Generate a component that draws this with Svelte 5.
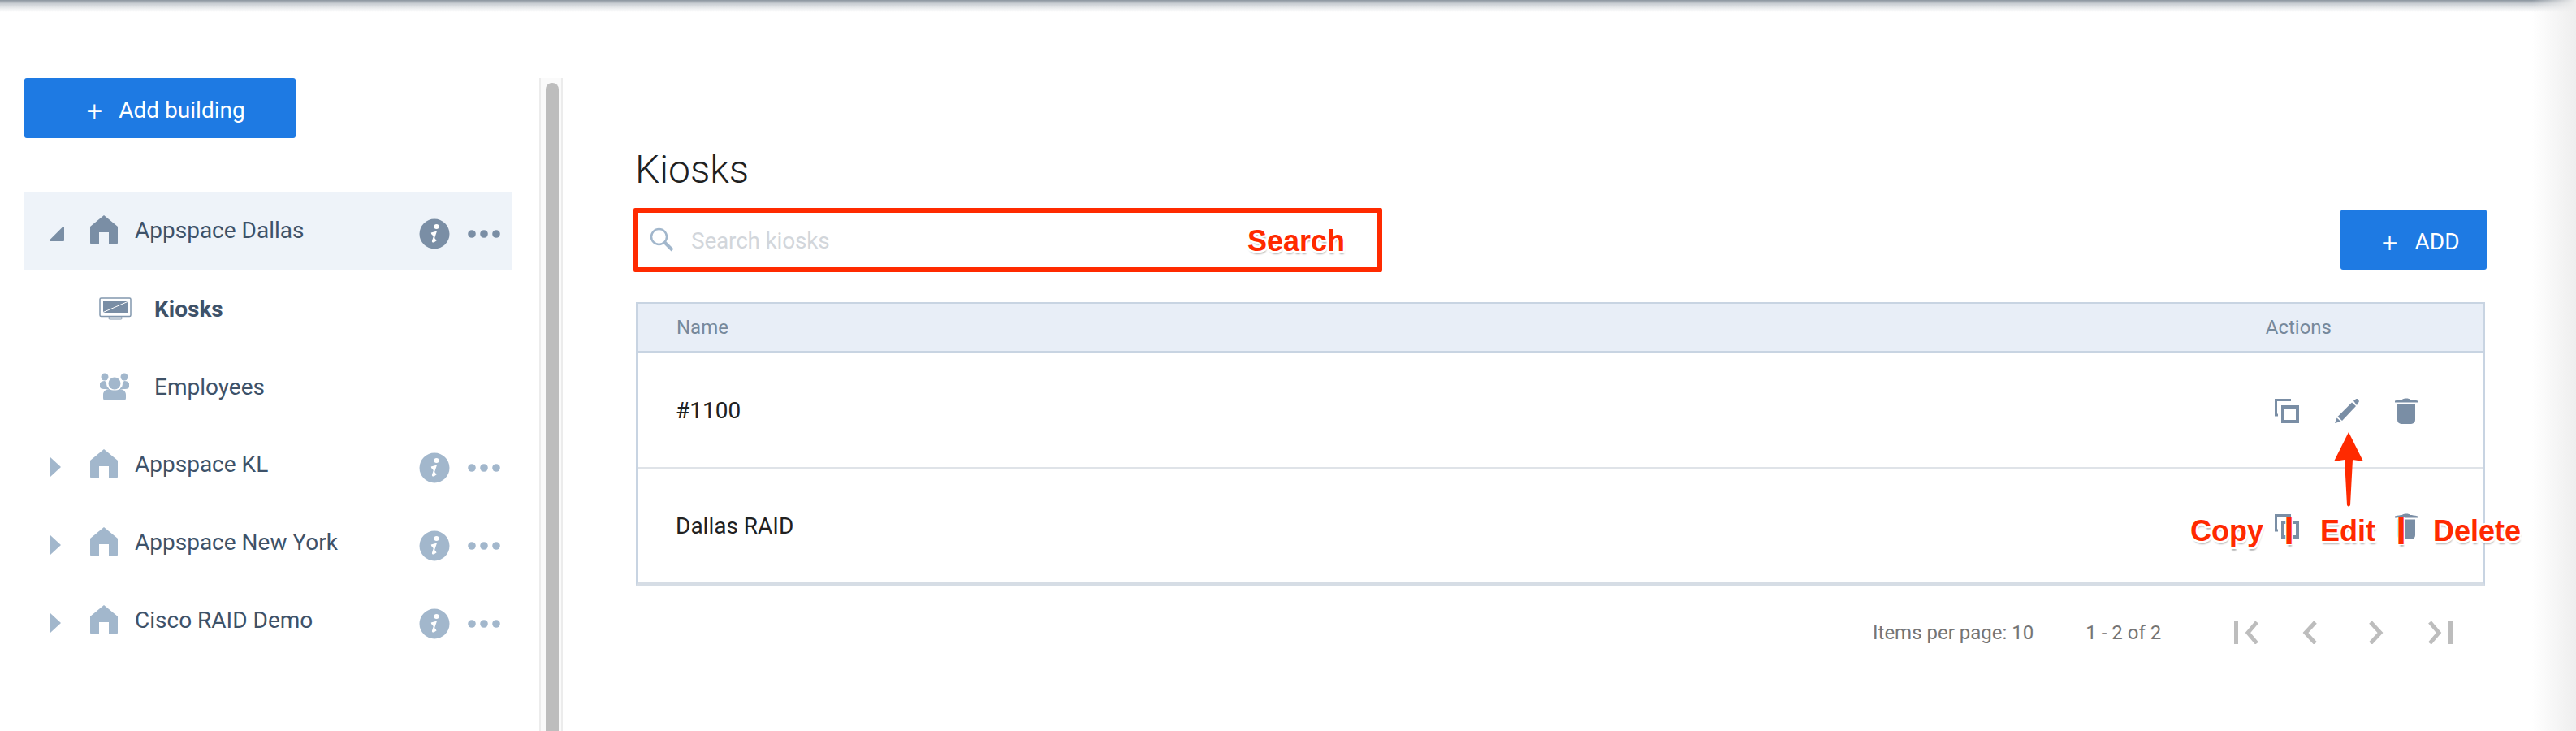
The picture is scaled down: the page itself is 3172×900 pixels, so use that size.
<script>
  const buildings = [
    { name: "Appspace Dallas", open: true },
    { name: "Appspace KL", open: false },
    { name: "Appspace New York", open: false },
    { name: "Cisco RAID Demo", open: false },
  ];
  const kiosks = ["#1100", "Dallas RAID"];
</script>

<div class="page">
  <div class="layout">
    <aside class="sidebar">
      <button class="btn add-building"><span class="plus">+</span>Add building</button>
      <ul class="tree">
        {#each buildings as b}
          <li class="row" class:open={b.open}>
            {#if b.open}
              <svg class="caret" width="18" height="18" viewBox="0 0 18 18"><path d="M18 1V17a1 1 0 0 1-1 1H1a1 1 0 0 1-.7-1.7L16.300.300A1 1 0 0 1 18 1z" /></svg>
            {:else}
              <svg class="caret" width="18" height="24" viewBox="0 0 18 24"><path d="M1 0l13 12L1 24z" /></svg>
            {/if}
            <svg class="home" width="34" height="36" viewBox="0 0 34 36"><path d="M17 0L34 14V34a2 2 0 0 1-2 2H23V21H11V36H2a2 2 0 0 1-2-2V14z" /></svg>
            <span class="name">{b.name}</span>
            <span class="row-actions">
              <svg width="38" height="38" viewBox="0 0 38 38">
                <circle class="disc" cx="19" cy="19" r="18.500" />
                <circle class="cut" cx="21.500" cy="10" r="3" />
                <path class="cut-line" d="M15 18.500l5.500-1.500-3.500 10.500c-.5 1.500 1 1.500 4-1" />
              </svg>
              <svg class="dots" width="40" height="10" viewBox="0 0 40 10">
                <circle cx="5" cy="5" r="4.800" /><circle cx="20" cy="5" r="4.800" /><circle cx="35" cy="5" r="4.800" />
              </svg>
            </span>
          </li>
          {#if b.open}
            <li class="sub">
              <svg width="40" height="28" viewBox="0 0 40 28">
                <rect x="1" y="1" width="38" height="22.500" rx="1.500" fill="#fff" stroke="#8398ae" stroke-width="1.500" />
                <rect x="5" y="5" width="30" height="14" fill="#7a8ea5" />
                <path d="M5 18.500L35 5.500" stroke="#fff" stroke-width="1" />
                <rect x="12" y="24" width="16" height="3" rx="1" fill="#fff" stroke="#8398ae" />
              </svg>
              <b>Kiosks</b>
            </li>
            <li class="sub">
              <svg class="people" width="40" height="34" viewBox="0 0 40 34">
                <circle cx="7" cy="5" r="4.500" /><circle cx="31" cy="5" r="4.500" />
                <path d="M1 13c1-2 3-3 6-3l2 2c0 4 1 6 3 7v1H6c-3 0-5-1-5-3z" />
                <path d="M37 13c-1-2-3-3-6-3l-2 2c0 4-1 6-3 7v1h6c3 0 5-1 5-3z" />
                <circle cx="19" cy="13" r="7.500" />
                <path d="M5 27c0-4 3-7 8-7 2 2 10 2 12 0 5 0 8 3 8 7v4a3 3 0 0 1-3 3H8a3 3 0 0 1-3-3z" />
              </svg>
              <span>Employees</span>
            </li>
          {/if}
        {/each}
      </ul>
    </aside>

    <div class="splitter"><div class="thumb"></div></div>

    <main class="content">
      <h1>Kiosks</h1>
      <div class="toolbar">
        <div class="search">
          <svg width="30" height="30" viewBox="0 0 30 30" fill="none" stroke="#a2b7cc">
            <circle cx="11.500" cy="11.500" r="9.500" stroke-width="2.500" />
            <path d="M18.500 18.500L28 28" stroke-width="4" />
          </svg>
          <span>Search kiosks</span>
        </div>
        <button class="btn add"><span class="plus">+</span>ADD</button>
      </div>

      <div class="table">
        <div class="thead"><span>Name</span><span class="actions-head">Actions</span></div>
        {#each kiosks as k, i}
          <div class="tr">
            <span>{k}</span>
            <span class="icons" class:ghost={i === 1}>
              <svg width="30" height="30" viewBox="0 0 30 30" fill="none" stroke="#7a8ea5" stroke-width="3">
                <path d="M20 1.500H1.500V20H4" />
                <rect x="10" y="10" width="18" height="18" stroke-width="4" />
              </svg>
              <svg class="pencil" width="30" height="30" viewBox="0 0 30 30" fill="#7a8ea5">
                <path d="M23 2.500l3-2.200a2 2 0 0 1 2.500.3l1 1.500a2 2 0 0 1-.3 2.400L27 8z" />
                <path d="M21 4.500l5 4.500L9 27 3.500 22z" />
                <path d="M2.500 23.500l5 4.500L0 30z" />
              </svg>
              <svg width="28" height="32" viewBox="0 0 28 32" fill="#7a8ea5">
                <path d="M0 3.500c4-1 7-1.500 9-1.500 1-2 9-2 10 0 2 0 5 .5 9 1.500v2H0z" />
                <path d="M3 7.500H25V27a5 5 0 0 1-5 5H8a5 5 0 0 1-5-5z" />
              </svg>
            </span>
          </div>
        {/each}
      </div>

      <div class="pager">
        <span>Items per page: 10</span>
        <span class="range">1 - 2 of 2</span>
        <svg width="30" height="28" viewBox="0 0 30 28"><path d="M2.500 0V28M28 1L17 14l11 13" /></svg>
        <svg class="prev" width="18" height="28" viewBox="0 0 18 28"><path d="M16 1L4 14l12 13" /></svg>
        <svg class="next" width="18" height="28" viewBox="0 0 18 28"><path d="M2 1l12 13L2 27" /></svg>
        <svg class="last" width="30" height="28" viewBox="0 0 30 28"><path d="M27.500 0V28M2 1l11 13L2 27" /></svg>
      </div>
    </main>
  </div>

  <!-- screenshot annotations, drawn on top of the app -->
  <div class="mark-box"></div>
  <span class="note n-search">Search</span>
  <span class="note n-copy">Copy</span>
  <span class="note bar n-bar1">|</span>
  <span class="note n-edit">Edit</span>
  <span class="note bar n-bar2">|</span>
  <span class="note n-delete">Delete</span>
  <svg class="mark-arrow" width="36" height="92" viewBox="0 0 36 92"><path d="M18 0L36 36l-13-2-3 56q-2 3-4 0L13 34 0 36z" /></svg>

  <div class="shade-top"></div>
  <div class="shade-right"></div>
</div>

<style>
  :global(body) {
    margin: 0;
    background: #fff;
  }
  .page {
    position: relative;
    width: 3172px;
    height: 900px;
    overflow: hidden;
    font-family: Roboto, "Liberation Sans", sans-serif;
    color: #3e5269;
  }
  .layout {
    display: flex;
    height: 900px;
  }
  .btn {
    display: flex;
    align-items: center;
    justify-content: center;
    border: 0;
    border-radius: 3px;
    background: #1e7ae3;
    color: #fff;
    font-family: inherit;
    font-size: 28px;
  }
  .plus {
    width: 20px;
    font-weight: 300;
    font-size: 34px;
    line-height: 1;
  }

  .sidebar {
    width: 664px;
    box-sizing: border-box;
    padding: 96px 0 0 30px;
  }
  .add-building {
    width: 334px;
    height: 74px;
    padding: 5px 0 0 14px;
    gap: 20px;
  }
  .tree {
    list-style: none;
    width: 600px;
    margin: 66px 0 0;
    padding: 0;
  }
  .row {
    display: flex;
    align-items: center;
    height: 96px;
    padding: 0 14px 0 31px;
    font-size: 28px;
    fill: #a2b7cc;
  }
  .row.open {
    background: #eef3f9;
    fill: #7a8ea5;
  }
  .caret {
    flex: none;
    width: 18px;
    margin-top: 8px;
  }
  .row:not(.open) .caret {
    margin-top: 6px;
  }
  .home {
    flex: none;
    margin-left: 32px;
    margin-top: -2px;
  }
  .name {
    margin-left: 21px;
    margin-top: -1px;
  }
  .row-actions {
    display: flex;
    align-items: center;
    gap: 22px;
    margin-left: auto;
    margin-top: 8px;
  }
  .disc {
    fill: inherit;
  }
  .cut {
    fill: #fff;
  }
  .cut-line {
    fill: #fff;
    stroke: #fff;
    stroke-width: 2;
  }
  .sub {
    display: flex;
    align-items: center;
    gap: 28px;
    height: 96px;
    padding-left: 92px;
    font-size: 28px;
  }
  .sub b {
    font-weight: 700;
  }
  .people {
    fill: #a2b7cc;
  }

  .splitter {
    flex: none;
    width: 29px;
    box-sizing: border-box;
    margin-top: 96px;
    padding: 6px 5px 0 6px;
    background: #fafafa;
    border-left: 2px solid #ececec;
    border-right: 2px solid #ececec;
  }
  .thumb {
    height: 100%;
    width: 16px;
    background: #bdbdbd;
    border-radius: 8px 8px 0 0;
  }

  .content {
    display: flex;
    flex-direction: column;
    width: 2279px;
    margin-left: 90px;
    padding-top: 181px;
  }
  h1 {
    margin: 0 0 0 -1px;
    font-size: 48px;
    font-weight: 300;
    line-height: 56px;
    color: #212121;
  }
  .toolbar {
    display: flex;
    align-items: center;
    justify-content: space-between;
    margin-top: 21px;
  }
  .search {
    display: flex;
    align-items: center;
    gap: 21px;
    padding-left: 17px;
    font-size: 28px;
    letter-spacing: -0.2px;
    color: #d2d6db;
  }
  .search span {
    margin-top: 2px;
  }
  .add {
    width: 180px;
    height: 74px;
    padding: 5px 0 0 17px;
    gap: 21px;
  }

  .table {
    margin: 40px 2px 0 0;
    border: solid #c8d4e2;
    border-width: 2px 2px 4px;
    border-bottom-color: #d6dde5;
  }
  .thead {
    display: flex;
    align-items: center;
    justify-content: space-between;
    height: 58px;
    padding: 0 187px 0 48px;
    background: #e8eef7;
    border-bottom: 3px solid #c8d4e2;
    font-size: 24px;
    color: #77899b;
  }
  .tr {
    display: flex;
    align-items: center;
    justify-content: space-between;
    height: 140px;
    padding: 0 81px 0 47px;
    font-size: 28px;
    color: #212121;
  }
  .tr + .tr {
    border-top: 2px solid #dfe3e8;
  }
  .icons {
    display: flex;
    align-items: center;
    gap: 44px;
    margin-top: 2px;
  }
  .ghost .pencil {
    visibility: hidden;
  }

  .pager {
    display: flex;
    align-items: center;
    margin-top: 44px;
    padding-left: 1523px;
    font-size: 24px;
    color: #757575;
  }
  .range {
    margin-left: 64px;
    margin-right: 90px;
  }
  .pager svg {
    fill: none;
    stroke: #bdbdbd;
    stroke-width: 5;
  }
  .prev {
    margin-left: 54px;
  }
  .next {
    margin-left: 64px;
  }
  .last {
    margin-left: 55px;
  }

  .mark-box {
    position: absolute;
    left: 780px;
    top: 256px;
    width: 910px;
    height: 67px;
    border: 6px solid #ff2a00;
    border-radius: 2px;
  }
  .note {
    position: absolute;
    font-family: "Liberation Sans", Arial, sans-serif;
    font-weight: 700;
    font-size: 36px;
    line-height: 42px;
    color: #ff2a00;
    text-shadow: 2px 0 0 #fff, -2px 0 0 #fff, 0 -2px 0 #fff, 0 2px 0 #fff, 2px 2px 0 #fff, -2px 2px 0 #fff, 2px -2px 0 #fff, -2px -2px 0 #fff, 1px 4px 2px rgba(0, 0, 0, 0.3);
  }
  .bar {
    font-size: 33px;
    -webkit-text-stroke: 2px #ff2a00;
  }
  .n-search { left: 1536px; top: 276px; }
  .n-copy { left: 2697px; top: 633px; }
  .n-bar1 { left: 2814px; top: 630px; }
  .n-edit { left: 2857px; top: 633px; }
  .n-bar2 { left: 2952px; top: 630px; }
  .n-delete { left: 2996px; top: 633px; }
  .mark-arrow {
    position: absolute;
    left: 2874px;
    top: 532px;
    fill: #ff2a00;
  }

  .shade-top {
    position: absolute;
    inset: 0 0 auto 0;
    height: 15px;
    background: linear-gradient(#8a949e, #c9ced3 30%, #f4f5f6 80%, #fff);
  }
  .shade-right {
    position: absolute;
    top: 0;
    right: 0;
    bottom: 0;
    width: 54px;
    background: linear-gradient(to right, rgba(238, 238, 238, 0), #eee);
  }
</style>
